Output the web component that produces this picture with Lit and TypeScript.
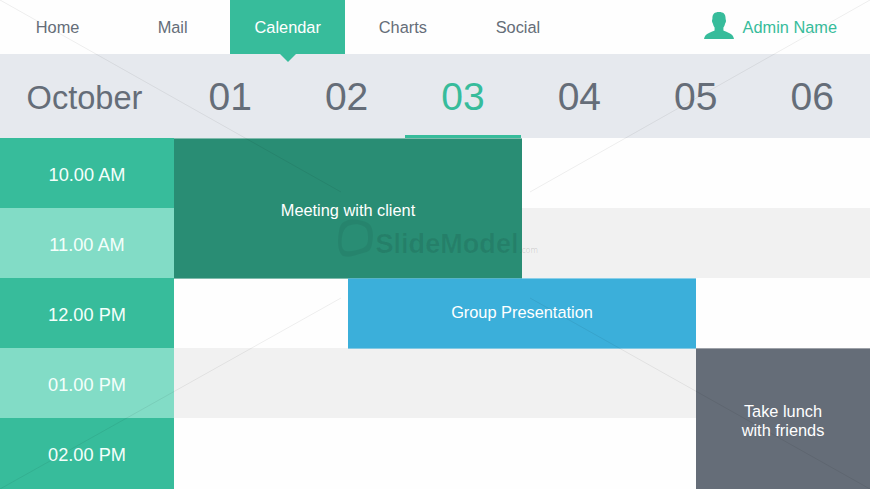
import { LitElement, html, css, svg } from "lit";
import { customElement, property, state } from "lit/decorators.js";
import { classMap } from "lit/directives/class-map.js";

@customElement("top-nav")
class TopNav extends LitElement {
  @property({ type: Array }) items: string[] = [];
  @property() active = "";
  @property() user = "";

  static styles = css`
    :host { display: block; height: 54px; background: #fefefe; }
    .bar { display: flex; height: 100%; font-size: 16.35px; color: #656d78; }
    .tabs { display: grid; grid-template-columns: repeat(5, 115.1px); }
    .tab { position: relative; display: flex; align-items: center; justify-content: center; }
    .tab.active { background: #37bc9b; color: #fff; }
    .tab.active::after {
      content: ""; position: absolute; top: 100%; left: 50%; margin-left: -8px;
      border: 8px solid transparent; border-bottom: 0; border-top-color: #37bc9b; z-index: 1;
    }
    .user { display: flex; align-items: center; gap: 9px; margin-left: auto; padding-right: 33px; color: #37bc9b; }
    .avatar { width: 30px; height: 27px; margin-top: -3px; fill: #37bc9b; }
  `;

  render() {
    return html`<nav class="bar">
      <div class="tabs">
        ${this.items.map((t) => html`<div class=${classMap({ tab: true, active: t === this.active })}>${t}</div>`)}
      </div>
      <div class="user">
        <svg class="avatar" viewBox="0 0 30 27">
          <path d="M15 0C10.500 0 8.400 2 8.400 6.500C8.400 7.500 7.900 8 8 9.200C8.200 10.500 8.700 10.700 9 12C9.300 13.600 9.900 14.800 10.600 15.600V18.600C9.600 19.300 7 20 5 20.900C2.200 22.200 .5 23.800 0 27H30C29.500 23.800 27.800 22.200 25 20.900C23 20 20.400 19.300 19.400 18.600V15.600C20.100 14.800 20.700 13.600 21 12C21.300 10.700 21.800 10.500 22 9.200C22.100 8 21.600 7.500 21.600 6.500C21.600 2 19.500 0 15 0Z"/>
        </svg>
        <span>${this.user}</span>
      </div>
    </nav>`;
  }
}

@customElement("day-header")
class DayHeader extends LitElement {
  @property() month = "";
  @property({ type: Array }) days: string[] = [];
  @property() active = "";

  static styles = css`
    :host { display: block; height: 84px; background: #e6e9ee; color: #656d78; }
    .row { display: grid; height: 100%; grid-template-columns: 172px repeat(6, 116.4px); overflow: hidden; }
    .month, .day { display: flex; align-items: center; justify-content: center; box-sizing: border-box; }
    .month { font-size: 32.6px; padding: 3px 3px 0 0; }
    .day { font-size: 39px; border-bottom: 3px solid transparent; padding-top: 4px; }
    .day.active { color: #37bc9b; border-bottom-color: #37bc9b; }
  `;

  render() {
    return html`<div class="row">
      <div class="month">${this.month}</div>
      ${this.days.map((d) => html`<div class=${classMap({ day: true, active: d === this.active })}>${d}</div>`)}
    </div>`;
  }
}

@customElement("schedule-grid")
class ScheduleGrid extends LitElement {
  @property({ type: Array }) times: string[] = [];

  static styles = css`
    :host { display: block; height: 351px; }
    .grid {
      display: grid; height: 100%;
      grid-template-columns: repeat(5, 174px);
      grid-template-rows: repeat(4, 70px) 71px;
    }
    .time, .event { display: flex; align-items: center; justify-content: center; text-align: center; color: #fff; box-sizing: border-box; }
    .time { grid-column: 1; font-size: 18.2px; padding-top: 4px; background: #37bc9b; color: #f4fffb; }
    .time.alt { background: #82dcc6; }
    .lane { grid-column: 2 / 6; background: #fefefe; }
    .lane.alt { background: #f1f1f1; }
    .r1 { grid-row: 1; } .r2 { grid-row: 2; } .r3 { grid-row: 3; } .r4 { grid-row: 4; } .r5 { grid-row: 5; }
    .event { font-size: 16.35px; line-height: 19px; background-clip: padding-box; border-top: 1px solid; border-bottom: 1px solid; margin-bottom: -1px; }
    .meeting { grid-area: 1 / 2 / 3 / 4; background-color: #298d74; border-color: #298d7499; padding-top: 3px; }
    .group { grid-area: 3 / 3 / 4 / 5; background-color: #3bafda; border-color: #3bafda99; padding-bottom: 3px; }
    .lunch { grid-area: 4 / 5 / 6 / 6; background-color: #656d78; border-color: #656d7899; padding-top: 3px; border-bottom: 0; margin-bottom: 0; }
  `;

  render() {
    return html`<div class="grid">
      ${this.times.map((t, i) => html`
        <div class="time r${i + 1} ${i % 2 ? "alt" : ""}">${t}</div>
        <div class="lane r${i + 1} ${i % 2 ? "alt" : ""}"></div>`)}
      <div class="event meeting">Meeting with client</div>
      <div class="event group">Group Presentation</div>
      <div class="event lunch">Take lunch<br />with friends</div>
    </div>`;
  }
}

@customElement("water-mark")
class WaterMark extends LitElement {
  static styles = css`
    :host { position: absolute; inset: 0; pointer-events: none; z-index: 2; }
    svg { display: block; }
    .line { stroke: #000; stroke-opacity: .065; stroke-width: 1; }
    .ring { fill: #000; fill-opacity: .06; fill-rule: evenodd; }
    .name { font: bold 28px "Liberation Sans", Arial, sans-serif; fill: #000; fill-opacity: .09; }
    .tld { font: 9.500px "Open Sans", sans-serif; fill: #000; fill-opacity: .14; }
  `;

  render() {
    const rays = [[0, 0, 341, 192], [870, 0, 530, 192], [0, 489, 341, 298], [870, 489, 530, 298]];
    return html`<svg width="870" height="489" viewBox="0 0 870 489">
      ${rays.map(([a, b, c, d]) => svg`<line class="line" x1=${a} y1=${b} x2=${c} y2=${d} />`)}
      <path class="ring" d="M346 221C351 218 362 220 368 223C373 226 374 235 372 244C371 250 369 252 363 253C356 255 350 258 343 256C338 253 337 242 339 231C340 225 342 222 346 221ZM351 225C346 226 343 230 342 237C341 245 342 250 346 251C350 252 358 250 363 248C367 246 368 243 368 238C368 231 367 228 363 226C359 224 355 224 351 225Z"/>
      <text class="name" x="375.500" y="252.500" textLength="143" lengthAdjust="spacingAndGlyphs">SlideModel</text>
      <text class="tld" x="519.500" y="253" textLength="18.500" lengthAdjust="spacingAndGlyphs">.com</text>
    </svg>`;
  }
}

@customElement("app-root")
class AppRoot extends LitElement {
  @state() private tab = "Calendar";
  @state() private day = "03";

  static styles = css`
    :host {
      display: flex; flex-direction: column; position: relative;
      width: 870px; height: 489px; overflow: hidden;
      font-family: "Liberation Sans", Arial, sans-serif;
    }
  `;

  render() {
    return html`
      <top-nav .items=${["Home", "Mail", "Calendar", "Charts", "Social"]} .active=${this.tab} user="Admin Name"></top-nav>
      <day-header month="October" .days=${["01", "02", "03", "04", "05", "06"]} .active=${this.day}></day-header>
      <schedule-grid .times=${["10.00 AM", "11.00 AM", "12.00 PM", "01.00 PM", "02.00 PM"]}></schedule-grid>
      <water-mark></water-mark>`;
  }
}
